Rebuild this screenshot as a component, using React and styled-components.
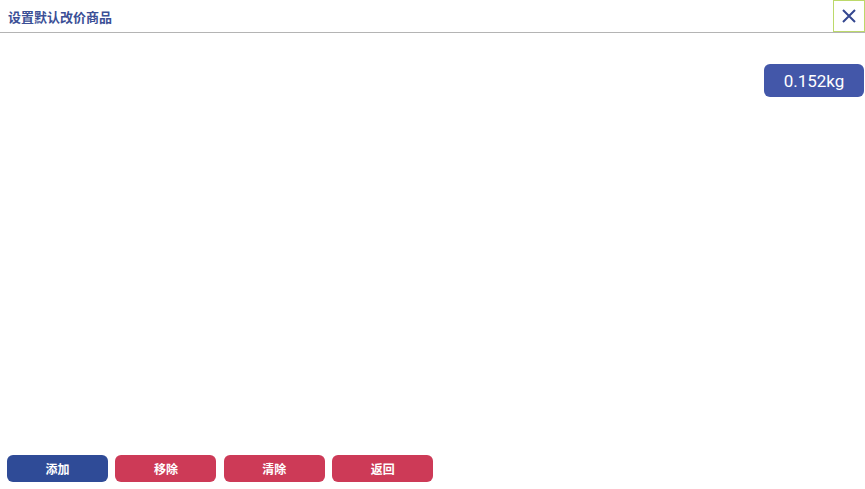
import React from "react";
import styled, { createGlobalStyle } from "styled-components";

const GlobalStyle = createGlobalStyle`
  html, body {
    margin: 0;
    padding: 0;
    background: #fff;
  }
  body {
    font-family: Roboto, "Noto Sans CJK SC", sans-serif;
  }
`;

const Page = styled.div`
  width: 865px;
  height: 489px;
  display: flex;
  flex-direction: column;
  overflow: hidden;
`;

const Header = styled.div`
  height: 32px;
  display: flex;
  align-items: stretch;
  justify-content: space-between;
  border-bottom: 1px solid #b4b4b4;
  box-sizing: content-box;
`;

const Title = styled.h1`
  margin: 0;
  padding-left: 8px;
  display: flex;
  align-items: center;
  font-size: 13px;
  font-weight: bold;
  color: #3b4f96;
  font-family: "Noto Sans CJK SC", sans-serif;
`;

const CloseButton = styled.button`
  width: 32px;
  height: 32px;
  padding: 0;
  border: 1px solid #bcd96a;
  background: #fff;
  display: flex;
  align-items: center;
  justify-content: center;
  box-sizing: border-box;
  cursor: pointer;
`;

const Body = styled.div`
  flex: 1;
  display: flex;
  flex-direction: column;
`;

const WeightRow = styled.div`
  display: flex;
  justify-content: flex-end;
  padding-top: 31px;
`;

const Weight = styled.div`
  width: 100px;
  height: 33px;
  margin-right: 1px;
  background: #4357a9;
  color: #fff;
  border-radius: 6px;
  display: flex;
  align-items: center;
  justify-content: center;
  font-size: 17px;
  font-family: Roboto, sans-serif;
`;

const Spacer = styled.div`
  flex: 1;
`;

const Footer = styled.div`
  display: flex;
  gap: 7.4px;
  padding: 0 0 7px 7px;
`;

const ActionButton = styled.button`
  width: 101px;
  height: 27px;
  border: none;
  border-radius: 6px;
  background: ${(p) => (p.$variant === "primary" ? "#2f4b97" : "#cd3a57")};
  color: #fff;
  font-size: 12px;
  font-weight: bold;
  font-family: "Noto Sans CJK SC", sans-serif;
  cursor: pointer;
  padding: 0;
`;

const buttons = [
  { label: "添加", variant: "primary" },
  { label: "移除", variant: "danger" },
  { label: "清除", variant: "danger" },
  { label: "返回", variant: "danger" },
];

const App = () => {
  return (
    <>
      <GlobalStyle />
      <Page>
        <Header>
          <Title>设置默认改价商品</Title>
          <CloseButton aria-label="close">
            <svg width="16" height="16" viewBox="0 0 16 16">
              <path d="M2 2 L14 14 M14 2 L2 14" stroke="#34478f" strokeWidth="2" fill="none" />
            </svg>
          </CloseButton>
        </Header>
        <Body>
          <WeightRow>
            <Weight>0.152kg</Weight>
          </WeightRow>
          <Spacer />
          <Footer>
            {buttons.map((b) => (
              <ActionButton key={b.label} $variant={b.variant}>
                {b.label}
              </ActionButton>
            ))}
          </Footer>
        </Body>
      </Page>
    </>
  );
};

export default App;
